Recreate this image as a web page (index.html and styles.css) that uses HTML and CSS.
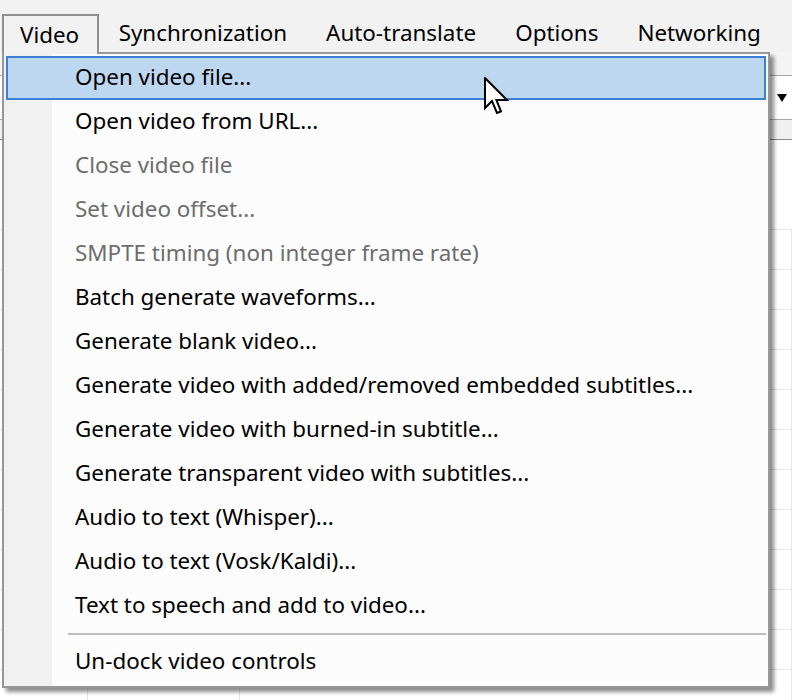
FILE: index.html
```html
<!DOCTYPE html>
<html>
<head>
<meta charset="utf-8">
<link rel="stylesheet" href="styles.css">
</head>
<body>
<div class="app">
  <div class="menubar">
    <div class="mb-item active">Video</div>
    <div class="mb-item">Synchronization</div>
    <div class="mb-item">Auto-translate</div>
    <div class="mb-item">Options</div>
    <div class="mb-item">Networking</div>
  </div>
  <div class="workspace">
    <div class="toolbar-row"></div>
    <div class="combo-row"><span class="combo-arrow"></span></div>
    <div class="header-row"></div>
    <div class="grid-spacer"></div>
    <div class="grid">
      <div class="grid-row"><span class="c1"></span><span class="c2"></span><span class="c3"></span></div>
      <div class="grid-row"><span class="c1"></span><span class="c2"></span><span class="c3"></span></div>
      <div class="grid-row"><span class="c1"></span><span class="c2"></span><span class="c3"></span></div>
      <div class="grid-row"><span class="c1"></span><span class="c2"></span><span class="c3"></span></div>
      <div class="grid-row"><span class="c1"></span><span class="c2"></span><span class="c3"></span></div>
      <div class="grid-row"><span class="c1"></span><span class="c2"></span><span class="c3"></span></div>
      <div class="grid-row"><span class="c1"></span><span class="c2"></span><span class="c3"></span></div>
      <div class="grid-row"><span class="c1"></span><span class="c2"></span><span class="c3"></span></div>
      <div class="grid-row"><span class="c1"></span><span class="c2"></span><span class="c3"></span></div>
      <div class="grid-row"><span class="c1"></span><span class="c2"></span><span class="c3"></span></div>
      <div class="grid-row"><span class="c1"></span><span class="c2"></span><span class="c3"></span></div>
      <div class="grid-row"><span class="c1"></span><span class="c2"></span><span class="c3"></span></div>
      <div class="grid-row"><span class="c1"></span><span class="c2"></span><span class="c3"></span></div>
    </div>
  </div>

  <div class="dropdown">
    <div class="dd-item hover">Open video file...</div>
    <div class="dd-item">Open video from URL...</div>
    <div class="dd-item disabled">Close video file</div>
    <div class="dd-item disabled">Set video offset...</div>
    <div class="dd-item disabled">SMPTE timing (non integer frame rate)</div>
    <div class="dd-item">Batch generate waveforms...</div>
    <div class="dd-item">Generate blank video...</div>
    <div class="dd-item">Generate video with added/removed embedded subtitles...</div>
    <div class="dd-item">Generate video with burned-in subtitle...</div>
    <div class="dd-item">Generate transparent video with subtitles...</div>
    <div class="dd-item">Audio to text (Whisper)...</div>
    <div class="dd-item">Audio to text (Vosk/Kaldi)...</div>
    <div class="dd-item">Text to speech and add to video...</div>
    <div class="dd-sep"></div>
    <div class="dd-item">Un-dock video controls</div>
  </div>

  <svg class="cursor" width="26" height="40" viewBox="0 0 13 20">
    <path d="M0.5 0.5 V15.5 L4 12 L6.5 18 L8.5 17.2 L6.2 11.5 H11.5 Z" fill="#fff" stroke="#000" stroke-width="1" stroke-linejoin="miter"/>
  </svg>
</div>
</body>
</html>
```

FILE: styles.css
```css
* { box-sizing: border-box; }

html, body {
  margin: 0;
  padding: 0;
  background: #ffffff;
}

.app {
  position: relative;
  width: 792px;
  height: 700px;
  overflow: hidden;
  font-family: "Noto Sans", "Open Sans", sans-serif;
  font-size: 22.4px;
  color: #000;
}

/* ---- menubar ---- */
.menubar {
  height: 52px;
  background: #f2f2f2;
  display: flex;
  align-items: stretch;
  padding-top: 14px;
  padding-left: 2px;
}

.mb-item {
  display: flex;
  align-items: center;
  padding: 0 19.5px 2px 19.5px;
  white-space: nowrap;
}

.mb-item.active {
  position: relative;
  z-index: 3;
  padding: 0 18px 2px 16px;
  border: 2px solid #8f8f8f;
  border-bottom: none;
  background: #f2f2f2;
  height: 40px;
}

/* ---- background workspace ---- */
.workspace {
  display: flex;
  flex-direction: column;
}

.toolbar-row {
  height: 24px;
  background: #f4f4f4;
  border-bottom: 1px solid #a8a8a8;
}

.combo-row {
  height: 44px;
  background: #ffffff;
  border-bottom: 1px solid #a8a8a8;
  display: flex;
  justify-content: flex-end;
  align-items: center;
  padding-right: 5px;
}

.combo-arrow {
  width: 0;
  height: 0;
  border-left: 5px solid transparent;
  border-right: 5px solid transparent;
  border-top: 8px solid #000;
}

.header-row {
  height: 20px;
  background: #f0f0f0;
  border-bottom: 1px solid #8a8a8a;
}

.grid-spacer {
  height: 89px;
  background: #ffffff;
}

.grid {
  display: flex;
  flex-direction: column;
}

.grid-row {
  height: 40px;
  border-top: 1px solid #e6e6e6;
  display: grid;
  grid-template-columns: 88px 152px 1fr;
}

.grid-row span {
  border-right: 1px solid #e6e6e6;
}

/* ---- dropdown menu ---- */
.dropdown {
  position: absolute;
  left: 2px;
  top: 52px;
  width: 768px;
  height: 636px;
  z-index: 2;
  border: 2px solid #979797;
  border-top: none;
  padding: 4px 2px 2px 2px;
  background: linear-gradient(to right, #f1f1f1 0, #f1f1f1 48px, #fcfcfc 48px);
  box-shadow: 4px 4px 4px rgba(0, 0, 0, 0.45);
}

.dropdown::before {
  content: "";
  position: absolute;
  top: 0;
  left: 95px;
  right: -2px;
  height: 2px;
  background: #979797;
}

.dd-item {
  height: 44px;
  display: flex;
  align-items: center;
  padding-left: 67px;
  padding-bottom: 3px;
  border: 2px solid transparent;
  white-space: nowrap;
}

.dd-item.hover {
  background: #bdd7f1;
  border-color: #3c7fd6;
}

.dd-item.disabled {
  color: #6d6d6d;
}

.dd-sep {
  height: 12px;
  margin-left: 62px;
  display: flex;
  align-items: center;
}

.dd-sep::after {
  content: "";
  display: block;
  width: 100%;
  height: 2px;
  background: #bdbdbd;
}

.cursor {
  position: absolute;
  left: 484px;
  top: 77px;
  z-index: 5;
}
```
